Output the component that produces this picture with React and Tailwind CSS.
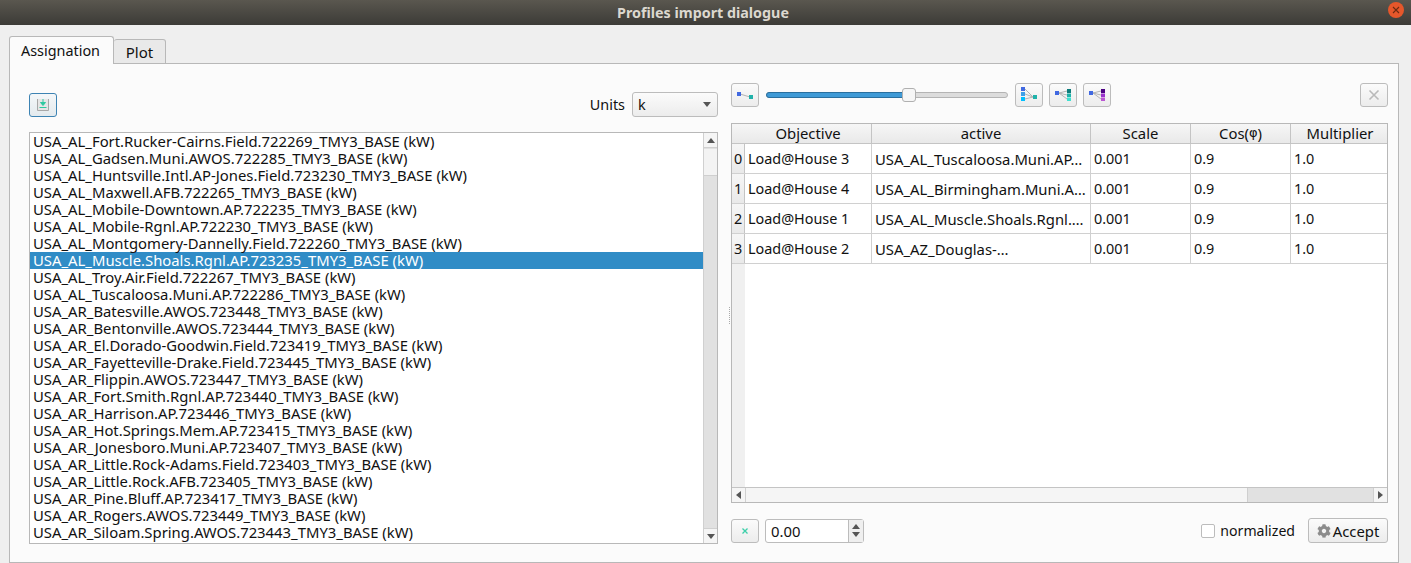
import React from 'react';
import { FaCog } from 'react-icons/fa';

const stations = [
  'USA_AL_Fort.Rucker-Cairns.Field.722269_TMY3_BASE (kW)',
  'USA_AL_Gadsen.Muni.AWOS.722285_TMY3_BASE (kW)',
  'USA_AL_Huntsville.Intl.AP-Jones.Field.723230_TMY3_BASE (kW)',
  'USA_AL_Maxwell.AFB.722265_TMY3_BASE (kW)',
  'USA_AL_Mobile-Downtown.AP.722235_TMY3_BASE (kW)',
  'USA_AL_Mobile-Rgnl.AP.722230_TMY3_BASE (kW)',
  'USA_AL_Montgomery-Dannelly.Field.722260_TMY3_BASE (kW)',
  'USA_AL_Muscle.Shoals.Rgnl.AP.723235_TMY3_BASE (kW)',
  'USA_AL_Troy.Air.Field.722267_TMY3_BASE (kW)',
  'USA_AL_Tuscaloosa.Muni.AP.722286_TMY3_BASE (kW)',
  'USA_AR_Batesville.AWOS.723448_TMY3_BASE (kW)',
  'USA_AR_Bentonville.AWOS.723444_TMY3_BASE (kW)',
  'USA_AR_El.Dorado-Goodwin.Field.723419_TMY3_BASE (kW)',
  'USA_AR_Fayetteville-Drake.Field.723445_TMY3_BASE (kW)',
  'USA_AR_Flippin.AWOS.723447_TMY3_BASE (kW)',
  'USA_AR_Fort.Smith.Rgnl.AP.723440_TMY3_BASE (kW)',
  'USA_AR_Harrison.AP.723446_TMY3_BASE (kW)',
  'USA_AR_Hot.Springs.Mem.AP.723415_TMY3_BASE (kW)',
  'USA_AR_Jonesboro.Muni.AP.723407_TMY3_BASE (kW)',
  'USA_AR_Little.Rock-Adams.Field.723403_TMY3_BASE (kW)',
  'USA_AR_Little.Rock.AFB.723405_TMY3_BASE (kW)',
  'USA_AR_Pine.Bluff.AP.723417_TMY3_BASE (kW)',
  'USA_AR_Rogers.AWOS.723449_TMY3_BASE (kW)',
  'USA_AR_Siloam.Spring.AWOS.723443_TMY3_BASE (kW)',
];

const rows = [
  ['0', 'Load@House 3', 'USA_AL_Tuscaloosa.Muni.AP…'],
  ['1', 'Load@House 4', 'USA_AL_Birmingham.Muni.A…'],
  ['2', 'Load@House 1', 'USA_AL_Muscle.Shoals.Rgnl.…'],
  ['3', 'Load@House 2', 'USA_AZ_Douglas-…'],
];

const grid = 'grid grid-cols-[13px_127px_219px_100px_100px_1fr]';
const btn = 'flex h-6 w-7 items-center justify-center rounded-[3px] border border-[#bcbcbc] bg-gradient-to-b from-[#fbfbfb] to-[#ececec]';
const head = 'flex items-center justify-center border-r border-[#c4c4c4] pb-[2px] last:border-r-0 text-[14.85px] leading-[18px]';

function Tree({ kind }) {
  // the four little node-graph icons of the toolbar
  const from = '#4169e1';
  if (kind === 'one') {
    return (
      <svg width="20" height="12" viewBox="0 0 20 12">
        <path d="M5 5 L15 8" stroke="#b4b4b4" fill="none" />
        <rect x="2" y="3" width="4" height="4" fill={from} />
        <rect x="14" y="6" width="4" height="4" fill="#20b2aa" />
      </svg>
    );
  }
  if (kind === 'merge') {
    return (
      <svg width="20" height="18" viewBox="0 0 20 18">
        <path d="M6 3 L14 11 M6 8 L14 11 M6 13 L14 11" stroke="#b4b4b4" fill="none" />
        <rect x="2" y="1" width="4" height="4" fill="#4169e1" />
        <rect x="2" y="6" width="4" height="4" fill="#3f9fe8" />
        <rect x="2" y="11" width="4" height="4" fill="#00bfff" />
        <rect x="14" y="9" width="4" height="4" fill="#20b2aa" />
      </svg>
    );
  }
  const c = kind === 'split' ? ['#0e7c7b', '#20b2aa', '#40e0d0'] : ['#4b0082', '#9932cc', '#ba55d3'];
  return (
    <svg width="20" height="18" viewBox="0 0 20 18">
      <path d="M6 7 L14 5 M6 7 L14 9 M6 7 L14 13" stroke="#b4b4b4" fill="none" />
      <rect x="2" y="5" width="4" height="4" fill={from} />
      <rect x="14" y="3" width="4" height="4" fill={c[0]} />
      <rect x="14" y="7.5" width="4" height="3.5" fill={c[1]} />
      <rect x="14" y="11.5" width="4" height="3.5" fill={c[2]} />
    </svg>
  );
}

function Arrow({ dir, className = '' }) {
  const d = { up: 'M0 5 L4 0 L8 5 Z', down: 'M0 0 L8 0 L4 5 Z', left: 'M5 0 L5 8 L0 4 Z', right: 'M0 0 L0 8 L5 4 Z' }[dir];
  const wide = dir === 'up' || dir === 'down';
  return (
    <svg width={wide ? 8 : 5} height={wide ? 5 : 8} viewBox={wide ? '0 0 8 5' : '0 0 5 8'} className={className}>
      <path d={d} fill="#555" />
    </svg>
  );
}

export default function App() {
  return (
    <div className="flex h-[563px] w-[1411px] flex-col overflow-hidden bg-[#efefef] font-['Noto_Sans','Open_Sans',sans-serif] text-[14.4px] leading-[18px] text-[#111]">
      <div className="relative flex h-[25px] shrink-0 items-center justify-center bg-gradient-to-b from-[#5a574f] to-[#3c3b37] pr-[5px]">
        <span className="text-[14.3px] font-bold text-[#dcd8cf]">Profiles import dialogue</span>
        <div className="absolute right-[7px] top-[2px] flex h-4 w-4 items-center justify-center rounded-full bg-[#e5572b] text-[#6b2a12]">
          <svg width="8" height="8" viewBox="0 0 8 8">
            <path d="M1 1 L7 7 M7 1 L1 7" stroke="currentColor" strokeWidth="1.1" />
          </svg>
        </div>
      </div>

      <div className="relative z-10 ml-[9px] mt-[11px] flex h-[28px] shrink-0 items-end">
        <div className="flex h-[28px] w-[105px] items-center justify-center rounded-t-[3px] border border-b-0 border-[#b8b8b8] bg-[#fbfbfb] pr-[2px]">Assignation</div>
        <div className="flex h-[25px] w-[52px] items-center justify-center rounded-t-[3px] border border-l-0 border-[#b8b8b8] bg-[#e9e9e9] text-[15px]">Plot</div>
      </div>

      <div className="ml-[9px] mt-[-1px] flex h-[500px] w-[1390px] shrink-0 border border-[#b8b8b8] bg-[#fbfbfb] pl-[19px] pr-[10px]">
        <div className="flex w-[689px] shrink-0 flex-col">
          <div className="flex items-center justify-between pt-[28px]">
            <div className="flex h-6 w-7 items-center justify-center rounded-[3px] border border-[#3d83b3] bg-gradient-to-b from-[#f4f7f9] to-[#e3eaee]">
              <svg width="14" height="14" viewBox="0 0 14 14">
                <path d="M1.5 1 V12.5 H12.5 V1" fill="#e6e6e6" stroke="#a8a8a8" />
                <path d="M7 1 V6 M4.5 4.5 L7 7.5 L9.5 4.5 Z" stroke="#2fc9a0" fill="#2fc9a0" />
                <path d="M3.5 9.5 H10.5" stroke="#2fc9a0" />
              </svg>
            </div>
            <div className="flex items-center gap-[7px]">
              <span>Units</span>
              <div className="flex h-[25px] w-[86px] items-center justify-between rounded-[3px] border border-[#bcbcbc] bg-gradient-to-b from-[#fbfbfb] to-[#ececec] pl-[5px] pr-[6px]">
                <span>k</span>
                <Arrow dir="down" />
              </div>
            </div>
          </div>

          <div className="mt-[15px] flex h-[412px] border border-[#b8b8b8] bg-white text-[14.85px] leading-[17px]">
            <div className="min-w-0 flex-1 overflow-hidden">
              {stations.map((s, i) => (
                <div key={i} className={`h-[17px] whitespace-nowrap pl-[3px] ${i === 7 ? 'bg-[#308cc6] text-white' : ''}`}>
                  {s}
                </div>
              ))}
            </div>
            <div className="flex w-[14px] shrink-0 flex-col border-l border-[#d0d0d0] bg-[#e1e1e1]">
              <div className="flex h-[15px] items-center justify-center border-b border-[#d0d0d0] bg-[#f5f5f5]"><Arrow dir="up" /></div>
              <div className="mt-px h-[27px] border-b border-[#cfcfcf] bg-[#f3f3f3]" />
              <div className="flex-1" />
              <div className="flex h-[15px] items-center justify-center border-t border-[#d0d0d0] bg-[#f5f5f5]"><Arrow dir="down" /></div>
            </div>
          </div>
        </div>

        {/* splitter handle */}
        <div className="flex w-[13px] shrink-0 justify-end pr-[1px] pt-[243px]">
          <div className="h-[17px] border-l border-dotted border-[#aaaaaa]" />
        </div>

        <div className="flex min-w-0 flex-1 flex-col">
          <div className="flex items-center pt-[19px]">
            <div className={btn}><Tree kind="one" /></div>
            <div className="relative ml-[7px] h-[6px] w-[242px] rounded-full border border-[#b4b4b4] bg-[#dcdcdc]">
              <div className="-m-px h-[6px] w-[140px] rounded-full border border-[#2a6f9e] bg-[#3f9ad6]" />
              <div className="absolute left-[135px] top-[-5px] h-[14px] w-[14px] rounded-[3px] border border-[#b0b0b0] bg-[#f6f6f6]" />
            </div>
            <div className={`ml-[7px] ${btn}`}><Tree kind="merge" /></div>
            <div className={`ml-[6px] ${btn}`}><Tree kind="split" /></div>
            <div className={`ml-[6px] ${btn}`}><Tree kind="purple" /></div>
            <div className={`ml-auto ${btn}`}>
              <svg width="12" height="12" viewBox="0 0 12 12">
                <path d="M1.5 1.5 L10.5 10.5 M10.5 1.5 L1.5 10.5" stroke="#b9b9b9" strokeWidth="1.6" />
              </svg>
            </div>
          </div>

          <div className="mt-[16px] flex h-[380px] flex-col border border-[#b8b8b8] bg-white">
            <div className={`${grid} h-[20px] shrink-0 border-b border-[#c4c4c4] bg-gradient-to-b from-[#f6f6f6] to-[#e9e9e9]`}>
              <div />
              <div className={head}>Objective</div>
              <div className={head}>active</div>
              <div className={head}>Scale</div>
              <div className={head}>Cos(<span className="font-['DejaVu_Sans',sans-serif] text-[13px]">φ</span>)</div>
              <div className={`${head} pl-[2px]`}>Multiplier</div>
            </div>
            <div className="min-h-0 flex-1 overflow-hidden bg-[linear-gradient(to_right,#f0f0f0_13px,#ffffff_13px)]">
              {rows.map((r) => (
                <div key={r[0]} className={`${grid} h-[30px] border-b border-[#d0d0d0]`}>
                  <div className="flex items-center justify-center border-r border-[#c4c4c4] bg-gradient-to-b from-[#f6f6f6] to-[#e9e9e9]">{r[0]}</div>
                  <div className="flex items-center border-r border-[#d0d0d0] bg-white pl-[3px]">{r[1]}</div>
                  <div className="flex items-center overflow-hidden whitespace-nowrap border-r border-[#d0d0d0] bg-white pl-[3px] text-[14.85px]">{r[2]}</div>
                  <div className="flex items-center border-r border-[#d0d0d0] bg-white pl-[3px]">0.001</div>
                  <div className="flex items-center border-r border-[#d0d0d0] bg-white pl-[3px]">0.9</div>
                  <div className="flex items-center bg-white pl-[3px]">1.0</div>
                </div>
              ))}
            </div>
            <div className="flex h-[15px] shrink-0 border-t border-[#c4c4c4] bg-[#e1e1e1]">
              <div className="flex w-[14px] items-center justify-center border-r border-[#d0d0d0] bg-[#f5f5f5]"><Arrow dir="left" /></div>
              <div className="w-[502px] border-r border-[#cfcfcf] bg-[#f5f5f5]" />
              <div className="flex-1" />
              <div className="flex w-[14px] items-center justify-center border-l border-[#d0d0d0] bg-[#f5f5f5]"><Arrow dir="right" /></div>
            </div>
          </div>

          <div className="mt-[15px] flex items-center">
            <div className={btn}>
              <svg width="8" height="8" viewBox="0 0 8 8">
                <path d="M1.5 1.5 L6.5 6.5 M6.5 1.5 L1.5 6.5" stroke="#3ccfa9" strokeWidth="1.3" />
              </svg>
            </div>
            <div className="ml-[6px] flex h-6 w-[99px] rounded-[3px] border border-[#bcbcbc] bg-white">
              <div className="flex flex-1 items-center pl-[5px] text-[14.85px]">0.00</div>
              <div className="flex w-[15px] flex-col items-center justify-center gap-[3px] border-l border-[#bcbcbc] bg-[#efefef]">
                <Arrow dir="up" />
                <Arrow dir="down" />
              </div>
            </div>
            <div className="ml-auto flex items-center">
              <div className="h-[14px] w-[14px] rounded-[2px] border border-[#bcbcbc] bg-white" />
              <span className="ml-[5px] text-[14.1px]">normalized</span>
              <div className="ml-[13px] flex h-[25px] w-[80px] items-center justify-center gap-[2px] rounded-[3px] border border-[#bcbcbc] bg-gradient-to-b from-[#fbfbfb] to-[#ececec] text-[14.85px]">
                <FaCog size={14} color="#8c8c8c" />
                <span>Accept</span>
              </div>
            </div>
          </div>
        </div>
      </div>
    </div>
  );
}
